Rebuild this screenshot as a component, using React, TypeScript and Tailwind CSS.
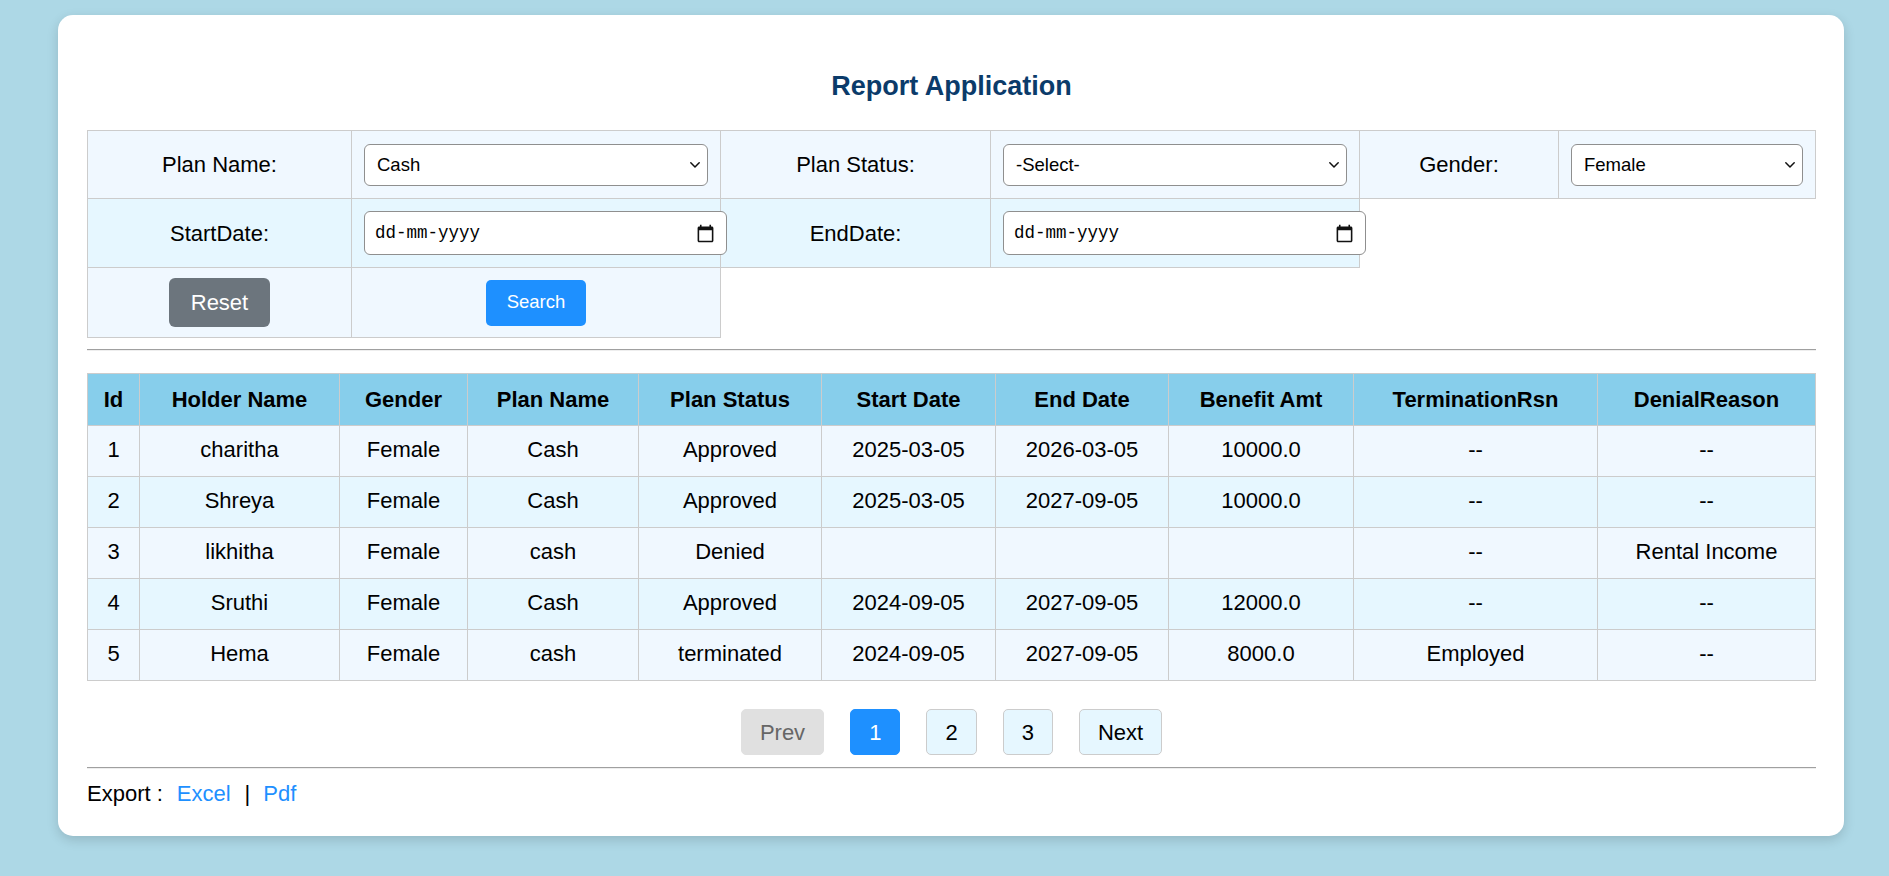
import React from "react";

const rows = [
  ["1", "charitha", "Female", "Cash", "Approved", "2025-03-05", "2026-03-05", "10000.0", "--", "--"],
  ["2", "Shreya", "Female", "Cash", "Approved", "2025-03-05", "2027-09-05", "10000.0", "--", "--"],
  ["3", "likhitha", "Female", "cash", "Denied", "", "", "", "--", "Rental Income"],
  ["4", "Sruthi", "Female", "Cash", "Approved", "2024-09-05", "2027-09-05", "12000.0", "--", "--"],
  ["5", "Hema", "Female", "cash", "terminated", "2024-09-05", "2027-09-05", "8000.0", "Employed", "--"],
];

const headers = [
  "Id",
  "Holder Name",
  "Gender",
  "Plan Name",
  "Plan Status",
  "Start Date",
  "End Date",
  "Benefit Amt",
  "TerminationRsn",
  "DenialReason",
];

function Chevron() {
  return (
    <svg width="12" height="8" viewBox="0 0 12 8" className="pointer-events-none absolute right-[7px] top-1/2 -translate-y-1/2">
      <path d="M1.8 1.8L6 6L10.2 1.8" fill="none" stroke="#111" strokeWidth="1.5" strokeLinecap="round" strokeLinejoin="round" />
    </svg>
  );
}

function Select({ value, options }: { value: string; options: string[] }) {
  return (
    <div className="relative w-full">
      <select
        defaultValue={value}
        className="h-[42px] w-full appearance-none rounded-[6px] border border-[#8f8f8f] bg-white pl-[12px] pr-[28px] text-[18.5px] text-black font-['Liberation_Sans',Arial,sans-serif]"
      >
        {options.map((o) => (
          <option key={o}>{o}</option>
        ))}
      </select>
      <Chevron />
    </div>
  );
}

function CalendarIcon() {
  return (
    <svg width="19" height="19" viewBox="0 0 24 24">
      <path
        fill="#111"
        d="M20 3h-1V1h-2v2H7V1H5v2H4c-1.1 0-2 .9-2 2v16c0 1.1.9 2 2 2h16c1.1 0 2-.9 2-2V5c0-1.1-.9-2-2-2zm0 18H4V8h16v13z"
      />
    </svg>
  );
}

function DateInput() {
  return (
    <div className="relative z-10 flex h-[44px] w-[363px] shrink-0 items-center justify-between rounded-[6px] border border-[#8f8f8f] bg-white pl-[10px] pr-[11px]">
      <input
        type="text"
        readOnly
        placeholder="dd-mm-yyyy"
        className="w-[200px] bg-transparent text-[17.5px] text-black outline-none placeholder:text-black font-['Liberation_Mono','DejaVu_Sans_Mono',monospace]"
      />
      <CalendarIcon />
    </div>
  );
}

const cell = "flex items-center justify-center border-r border-b border-[#cccccc] px-[12px]";

export default function App() {
  return (
    <div className="min-h-screen w-full bg-[#add8e6] pt-[15px] pb-[41px] font-['Liberation_Sans',Arial,sans-serif] text-black">
      <div className="ml-[58px] w-[1786px] rounded-[15px] bg-white pl-[29px] pr-[28px] pt-[29px] pb-[30px] shadow-[0_4px_12px_rgba(0,0,0,0.15)]">
        <h2 className="mt-[27px] mb-[28px] text-center text-[27px] font-bold leading-[31px] text-[#0b3b6a]">
          Report Application
        </h2>

        {/* Filters */}
        <div className="flex flex-col text-[22px]">
          <div className="flex h-[69px] w-fit bg-[#f0f8ff]">
            <div className={`${cell} w-[265px] border-l border-t`}>Plan Name:</div>
            <div className={`${cell} w-[369px] border-t`}>
              <Select value="Cash" options={["-Select-", "Cash", "Food", "Medical"]} />
            </div>
            <div className={`${cell} w-[270px] border-t`}>Plan Status:</div>
            <div className={`${cell} w-[369px] border-t`}>
              <Select value="-Select-" options={["-Select-", "Approved", "Denied", "Terminated"]} />
            </div>
            <div className={`${cell} w-[199px] border-t`}>Gender:</div>
            <div className={`${cell} w-[257px] border-t`}>
              <Select value="Female" options={["-Select-", "Male", "Female"]} />
            </div>
          </div>
          <div className="flex h-[69px] w-fit bg-[#e6f7ff]">
            <div className={`${cell} w-[265px] border-l`}>StartDate:</div>
            <div className={`${cell} w-[369px] justify-start`}>
              <DateInput />
            </div>
            <div className={`${cell} w-[270px]`}>EndDate:</div>
            <div className={`${cell} w-[369px] justify-start`}>
              <DateInput />
            </div>
          </div>
          <div className="flex h-[70px] w-fit bg-[#f0f8ff]">
            <div className={`${cell} w-[265px] border-l`}>
              <button className="h-[49px] w-[101px] rounded-[6px] bg-[#6c757d] text-[22px] text-white">Reset</button>
            </div>
            <div className={`${cell} w-[369px]`}>
              <button className="h-[46px] w-[100px] rounded-[5px] bg-[#1e90ff] pb-[2px] text-[18.5px] text-white">Search</button>
            </div>
          </div>
        </div>

        <div className="mt-[11px] h-[2px] border-t border-b border-t-[#a0a0a0] border-b-[#eeeeee]" />

        {/* Data table */}
        <div className="mt-[22px] grid grid-cols-[53px_200px_128px_171px_183px_174px_173px_185px_244px_218px] text-[22px]">
          {headers.map((h, i) => (
            <div
              key={h}
              className={`flex h-[53px] items-center justify-center border-t border-r border-b border-[#cccccc] bg-[#87ceeb] font-bold ${i === 0 ? "border-l" : ""}`}
            >
              {h}
            </div>
          ))}
          {rows.map((r, ri) =>
            r.map((c, ci) => (
              <div
                key={`${ri}-${ci}`}
                className={`flex h-[51px] items-center justify-center border-r border-b border-[#cccccc] pb-[4px] ${
                  ri % 2 === 0 ? "bg-[#f0f8ff]" : "bg-[#e6f7ff]"
                } ${ci === 0 ? "border-l" : ""}`}
              >
                {c}
              </div>
            ))
          )}
        </div>

        {/* Pagination */}
        <div className="mt-[28px] flex items-center justify-center gap-[26px] text-[22px]">
          <button className="h-[46px] rounded-[5px] border border-[#e0e0e0] bg-[#e0e0e0] px-[18px] text-[#666666]">Prev</button>
          <button className="h-[46px] rounded-[5px] border border-[#1e90ff] bg-[#1e90ff] px-[18px] text-white">1</button>
          <button className="h-[46px] rounded-[5px] border border-[#cccccc] bg-[#e6f7ff] px-[18px] text-black">2</button>
          <button className="h-[46px] rounded-[5px] border border-[#cccccc] bg-[#e6f7ff] px-[18px] text-black">3</button>
          <button className="h-[46px] rounded-[5px] border border-[#cccccc] bg-[#e6f7ff] px-[18px] text-black">Next</button>
        </div>

        <div className="mt-[12px] h-[2px] border-t border-b border-t-[#a0a0a0] border-b-[#eeeeee]" />

        {/* Export */}
        <div className="mt-[12px] flex h-[25px] items-center text-[22px] leading-[25px]">
          <span>Export :</span>
          <a href="#" className="ml-[14px] text-[#1e90ff]">Excel</a>
          <span className="ml-[14px]">|</span>
          <a href="#" className="ml-[13px] text-[#1e90ff]">Pdf</a>
        </div>
      </div>
    </div>
  );
}
